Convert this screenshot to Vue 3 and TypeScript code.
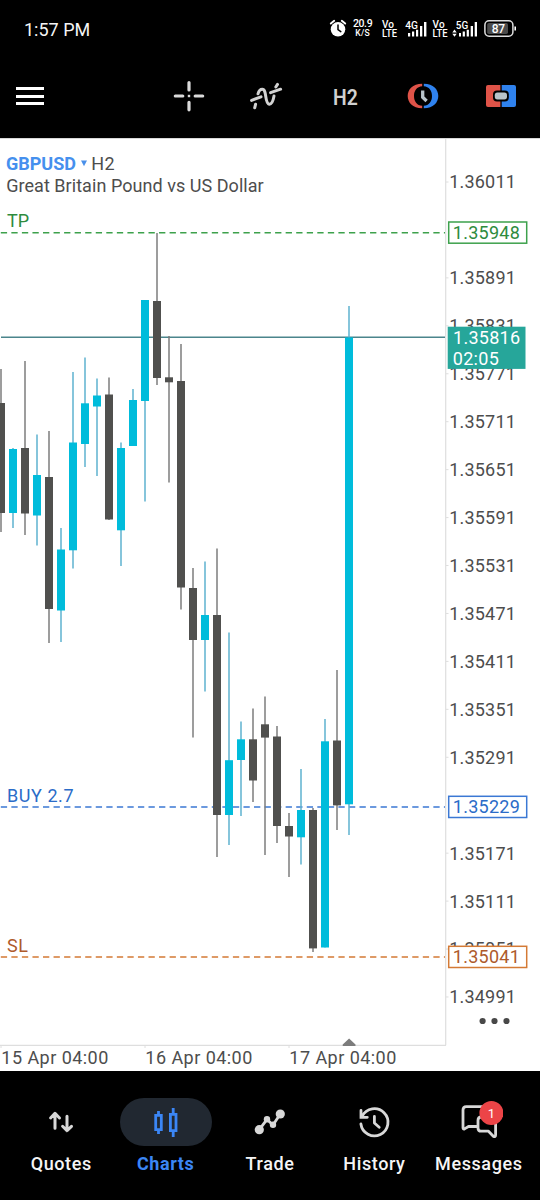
<script setup lang="ts">
interface Candle {
  x: number
  high: number
  top: number
  bottom: number
  low: number
  up: boolean
}

type Row = [number, number, number, number, 0 | 1]

// high, body top, body bottom, low, rising
const rows: Row[] = [
  [369, 403, 513, 532, 0],
  [448, 449, 513, 528, 1],
  [361, 448, 513.5, 535, 0],
  [434.5, 475, 515.5, 545.5, 1],
  [431, 477, 609, 643, 0],
  [528, 549.5, 610.5, 642, 1],
  [372, 442.5, 550.3, 568.5, 1],
  [357.5, 403.3, 444, 467, 1],
  [378.5, 395.5, 406.5, 476, 1],
  [377.5, 394.5, 519.5, 520, 0],
  [442.5, 448, 530.3, 566, 1],
  [389, 400, 446, 446, 1],
  [300, 300, 401, 501.5, 1],
  [233, 301, 378, 385, 0],
  [336, 377.3, 382.3, 482.5, 0],
  [344, 381, 587.5, 609.5, 0],
  [568, 588, 640, 737.5, 0],
  [561.5, 615, 640, 691.5, 1],
  [548.5, 615, 815, 857, 0],
  [632.5, 760.2, 815, 845, 1],
  [721.5, 739.3, 760, 816, 1],
  [708.5, 739.3, 780.5, 802, 0],
  [696.5, 724.3, 737.6, 855, 0],
  [726, 736.5, 826, 843, 0],
  [813, 826, 836.5, 877, 0],
  [769, 810, 837.3, 864.5, 1],
  [808, 810, 948.4, 952, 0],
  [719, 741.3, 947.5, 947.5, 1],
  [670, 740.5, 805.4, 830, 0],
  [306, 337.4, 804.3, 835, 1],
]

const candles: Candle[] = rows.map(([high, top, bottom, low, up], i) => ({
  x: 1 + i * 12,
  high,
  top,
  bottom,
  low,
  up: up === 1,
}))

const levels = [
  { key: 'tp', name: 'TP', price: '1.35948', y: 232.7, w: 22 },
  { key: 'buy', name: 'BUY 2.7', price: '1.35229', y: 807, w: 66.5 },
  { key: 'sl', name: 'SL', price: '1.35041', y: 957, w: 21 },
]

// A scale label that a level box would cover completely is left out.
const scale = Array.from({ length: 18 }, (_, i) => ({
  label: (1.36011 - i * 0.0006).toFixed(5),
  y: 182 + i * 47.94,
})).filter((tick) => !levels.some((level) => Math.abs(level.y - tick.y) < 4))

const dates = [
  { label: '15 Apr 04:00', x: 1 },
  { label: '16 Apr 04:00', x: 145 },
  { label: '17 Apr 04:00', x: 289 },
]

const tabs = ['Quotes', 'Charts', 'Trade', 'History', 'Messages']
</script>

<template>
  <div class="screen">
    <header class="status">
      <span class="time">1:57 PM</span>
      <svg class="indicators" width="196" height="30" viewBox="326 14 196 30">
        <g class="alarm">
          <circle cx="338" cy="29.3" r="7.3" fill="#fff" />
          <path d="M330.8 23.6l3.4-2.8M345.2 23.6l-3.4-2.8" stroke="#fff" stroke-width="1.9" stroke-linecap="round" />
          <path d="M338 25v4.6l2.8 2" fill="none" stroke="#000" stroke-width="1.5" stroke-linecap="round" />
        </g>
        <g class="tiny">
          <text x="353" y="27" font-size="10.5" textLength="19.6">20.9</text>
          <text x="355.3" y="36.3" font-size="8.6" textLength="14.4">K/S</text>
          <text x="382" y="27.5" font-size="10" textLength="12">Vo</text>
          <text x="382" y="36.5" font-size="10" textLength="15" lengthAdjust="spacingAndGlyphs">LTE</text>
          <text x="405.3" y="28.6" font-size="11" textLength="12.7" lengthAdjust="spacingAndGlyphs">4G</text>
          <text x="432.6" y="27.5" font-size="10" textLength="12">Vo</text>
          <text x="432.6" y="36.5" font-size="10" textLength="15" lengthAdjust="spacingAndGlyphs">LTE</text>
          <text x="455.8" y="28.6" font-size="11" textLength="12.4" lengthAdjust="spacingAndGlyphs">5G</text>
        </g>
        <g fill="#fff">
          <path d="M408 33h2.2v3.4h-2.2zM412 31.6h2.2v4.8h-2.2zM416 29.8h2.2v6.6h-2.2zM420 26h2.3v10.4h-2.3zM424 22h2.4v14.4h-2.4z" />
          <path d="M459 33h2v3.4h-2zM462.7 31.6h2.2v4.8h-2.2zM466.7 29.8h2.2v6.6h-2.2zM470.7 26h2.3v10.4h-2.3zM474.7 22h2.3v14.4h-2.3z" />
          <path d="M452.3 32.5l2.2-3 2.2 3zM452.3 33.7l2.2 3 2.2-3z" />
          <path d="M514.4 26.5h1.6v4h-1.6z" />
        </g>
        <rect x="484.9" y="20.7" width="28" height="15.6" rx="4.2" fill="none" stroke="#ddd" stroke-width="1.5" />
        <rect x="487.2" y="23" width="20.8" height="11" rx="1.8" fill="#4b4b4b" />
        <text class="charge" x="491.8" y="32.9" font-size="12" textLength="13.4">87</text>
      </svg>
    </header>

    <nav class="toolbar">
      <button class="menu" aria-label="Menu"><i></i><i></i><i></i></button>
      <div class="tools">
        <svg width="40" height="40" viewBox="0 0 40 40">
          <path d="M20 6.5v7.5M20 26.3v7.5M6.3 20h7.5M26.2 20h7.5" stroke="#dadada" stroke-width="3.2" stroke-linecap="round" />
          <rect x="18.8" y="18.8" width="2.4" height="2.4" fill="#dadada" />
        </svg>
        <svg width="40" height="40" viewBox="0 0 40 40" fill="none" stroke="#d2d2d2" stroke-width="3" stroke-linecap="round">
          <path d="M4.6 24.4L14 20.8M23.6 16.7L33.6 13.2M28.8 11L30.5 8.4M7.7 31.8L8.6 28.2" />
          <path d="M11 17.8C11.9 14.5 13.7 13.3 15.3 13.3C20.1 13.3 17.4 27.6 22.2 28.2C25.2 28.5 26.2 24.5 27 20" />
        </svg>
        <span class="period">H2</span>
        <svg width="40" height="40" viewBox="0 0 40 40">
          <path d="M19.2 7.7C9.5 7.7 4.7 13.6 4.7 20s4.800 12.300 14.500 12.300v-2.500C13.900 29.500 11 25.300 11 20s2.900-9.500 8.200-9.800z" fill="#df5348" />
          <path d="M20.8 7.7C30.5 7.7 35.3 13.600 35.300 20s-4.800 12.300-14.500 12.300v-2.500C26.100 29.500 29 25.300 29 20s-2.900-9.500-8.200-9.800z" fill="#2f82ee" />
          <path d="M19.7 14.5v6.7l3.900 3.800" fill="none" stroke="#b8c3ca" stroke-width="3.3" />
        </svg>
        <svg width="40" height="40" viewBox="0 0 40 40">
          <path d="M19.4 9H7a2 2 0 0 0-2 2v18a2 2 0 0 0 2 2h12.400z" fill="#df5348" />
          <path d="M20.7 9H33a2 2 0 0 1 2 2v18a2 2 0 0 1-2 2H20.700z" fill="#2f82ee" />
          <rect x="12" y="14.600" width="15.800" height="10.800" rx="4" fill="#000" />
          <rect x="13.800" y="16.600" width="12.200" height="6.800" rx="2.600" fill="#b8c3ca" />
        </svg>
      </div>
    </nav>

    <main>
      <svg class="chart" width="540" height="933" viewBox="0 138 540 933">
        <path d="M0 138.5H540" stroke="#d8d8d8" />
        <path d="M445.700 139V1045.300M0 1045.300H446" fill="none" stroke="#dedede" stroke-width="1.200" />

        <text class="symbol" x="6" y="169.800" textLength="70">GBPUSD</text>
        <path d="M81 160.600h6l-3 5.600z" fill="#4a90ea" />
        <text class="body" x="91.300" y="169.800" textLength="23.300">H2</text>
        <text class="body" x="6.200" y="191.800" textLength="257.500">Great Britain Pound vs US Dollar</text>

        <g v-for="tick in scale" :key="tick.label">
          <path :d="`M446 ${tick.y}h2.5`" stroke="#dedede" />
          <text class="price" x="449.300" :y="tick.y + 6.4" textLength="66.500">{{ tick.label }}</text>
        </g>

        <g v-for="level in levels" :key="level.key" :class="level.key">
          <path class="dash" :d="`M0.8 ${level.y}H445`" />
          <text class="tag" x="7" :y="level.y - 5.3" :textLength="level.w">{{ level.name }}</text>
          <rect class="box" x="448.700" :y="level.y - 10.7" width="78" height="21.200" />
          <text class="value" x="452.800" :y="level.y + 6.3" textLength="67">{{ level.price }}</text>
        </g>

        <path d="M1 337.300H445" stroke="#4b858c" stroke-width="1.500" />

        <g v-for="c in candles" :key="c.x" :class="c.up ? 'up' : 'down'">
          <path class="wick" :d="`M${c.x} ${c.high}V${c.low}`" />
          <rect :x="c.x - 4" :y="c.top" width="8" :height="c.bottom - c.top" />
        </g>

        <rect x="447.700" y="326.700" width="77.800" height="42.200" fill="#26a69a" />
        <text class="live" x="453" y="343.800" textLength="67">1.35816</text>
        <text class="live" x="452.800" y="364.700" textLength="46">02:05</text>

        <g fill="#484848">
          <circle cx="482.600" cy="1021" r="3.100" />
          <circle cx="494.500" cy="1021" r="3.100" />
          <circle cx="506.500" cy="1021" r="3.100" />
        </g>
        <path d="M342.700 1046v-1.500l6.400-6 6.400 6v1.500z" fill="#7c7c7c" />
        <g v-for="d in dates" :key="d.label">
          <path :d="`M${d.x} 1045v3`" stroke="#dedede" />
          <text class="body" :x="d.x + 0.3" y="1063.700" textLength="107">{{ d.label }}</text>
        </g>
      </svg>
    </main>

    <footer class="tabs">
      <a v-for="tab in tabs" :key="tab" class="tab" :class="{ active: tab === 'Charts' }">
        <span class="pill">
          <svg width="48" height="48" viewBox="0 0 48 48" fill="none" stroke="currentColor" stroke-width="2.8" stroke-linecap="round" stroke-linejoin="round">
            <template v-if="tab === 'Quotes'">
              <path d="M18 30.200V15.500M13.600 20L18 15.300L22.500 20M30 18.200V32.500M25.600 28.300L30 32.600L34.500 28.300" stroke-width="3" />
            </template>
            <template v-else-if="tab === 'Charts'">
              <path d="M13.700 17.400h5.600v14.200h-5.600zM28.400 16.400h5.600v16.200h-5.600zM16.500 13v3.500M16.500 32v4M31.200 10v6M31.200 33v6" stroke-linecap="butt" stroke-linejoin="miter" />
            </template>
            <template v-else-if="tab === 'Trade'">
              <path d="M13.300 31.700L21 21.400L27 27L34.300 16" />
              <g fill="currentColor" stroke="none">
                <circle cx="13.300" cy="31.700" r="4.600" />
                <circle cx="34.300" cy="16" r="4.600" />
                <circle cx="21" cy="21.300" r="3.200" />
                <circle cx="27" cy="26.800" r="3.200" />
              </g>
            </template>
            <template v-else-if="tab === 'History'">
              <path d="M10.900 26A13.600 13.600 0 1 0 12.200 18.200" />
              <path d="M11 12.500V19.300H17.300" stroke-linejoin="miter" />
              <path d="M24.400 18.500V25L29.200 29.300" />
            </template>
            <template v-else>
              <path d="M22 28.500H13.500L9.500 30.900Q8 31.500 8 29.800V12Q8 8.700 11.300 8.700H34" />
              <path d="M30 19H26.300Q23 19 23 22.300V29.900Q23 33.200 26.300 33.200H33.500L38.300 38.200Q40.600 39.600 40.600 37V22" />
              <circle cx="36.400" cy="15" r="12" fill="#ec4447" stroke="none" />
              <text class="count" x="36.400" y="19.800" text-anchor="middle">1</text>
            </template>
          </svg>
        </span>
        <span class="label">{{ tab }}</span>
      </a>
    </footer>
  </div>
</template>

<style>
body {
  margin: 0;
  background: #000;
}
</style>

<style scoped>
.screen {
  width: 540px;
  height: 1200px;
  display: flex;
  flex-direction: column;
  overflow: hidden;
  background: #000;
  font-family: Roboto, sans-serif;
}
.status {
  height: 58px;
  flex: none;
  display: flex;
  align-items: center;
  justify-content: space-between;
  box-sizing: border-box;
  padding: 1px 18px 0 24px;
}
.indicators {
  margin-top: -1px;
}
.time {
  color: #f5f5f5;
  font-size: 18px;
  line-height: 22px;
}
.tiny,
.charge {
  fill: #fff;
  font-weight: 500;
}
.toolbar {
  height: 80px;
  flex: none;
  display: flex;
  align-items: center;
  box-sizing: border-box;
  padding: 0 0 4px 16px;
}
.menu {
  width: 28px;
  padding: 0;
  border: 0;
  background: none;
  display: flex;
  flex-direction: column;
  gap: 4.5px;
}
.menu i {
  height: 3px;
  background: #fff;
}
.tools {
  width: 390px;
  margin-left: auto;
  display: grid;
  grid-template-columns: repeat(5, 78px);
  place-items: center;
}
.period {
  padding-top: 1px;
  color: #d0d0d0;
  font-size: 22.5px;
  font-weight: 600;
  line-height: 28px;
  transform: scaleX(0.86);
}
main {
  height: 933px;
  flex: none;
  background: #fff;
}
.chart {
  display: block;
}
.symbol {
  fill: #4590ee;
  font-size: 18px;
  font-weight: 700;
}
.body,
.price {
  fill: #4d4d4d;
  font-size: 18px;
}
.tag,
.value,
.live {
  font-size: 18px;
}
.live {
  fill: #fff;
}
.dash {
  stroke-width: 1.6;
  stroke-dasharray: 6.3 4.25;
}
.box {
  fill: #fff;
  stroke-width: 1.5;
}
.tp .dash,
.tp .box {
  stroke: #3da14c;
}
.tp text {
  fill: #2e8b3d;
}
.buy .dash,
.buy .box {
  stroke: #3b78d4;
}
.buy text {
  fill: #2b6cc8;
}
.sl .dash,
.sl .box {
  stroke: #d47a35;
}
.sl text {
  fill: #ae5a2b;
}
.up {
  fill: #00bcdb;
  stroke: #5eb2cf;
}
.down {
  fill: #50504e;
  stroke: #7c7c7c;
}
.wick {
  stroke-width: 1.5;
}
.up rect,
.down rect {
  stroke: none;
}
.tabs {
  height: 129px;
  flex: none;
  display: flex;
  box-sizing: border-box;
  padding: 27px 9px 0;
}
.tab {
  flex: 1 1 0;
  display: flex;
  flex-direction: column;
  align-items: center;
  color: #d8d8d8;
}
.pill {
  width: 92px;
  height: 48px;
  border-radius: 24px;
  display: flex;
  justify-content: center;
}
.label {
  margin-top: 7px;
  color: #f5f5f5;
  font-size: 18px;
  font-weight: 500;
  line-height: 22px;
  letter-spacing: 0.6px;
}
.active,
.active .label {
  color: #3b86f5;
}
.active .label {
  font-weight: 700;
}
.active .pill {
  background: #212831;
}
.count {
  fill: #fff;
  stroke: none;
  font-size: 13px;
}
</style>
